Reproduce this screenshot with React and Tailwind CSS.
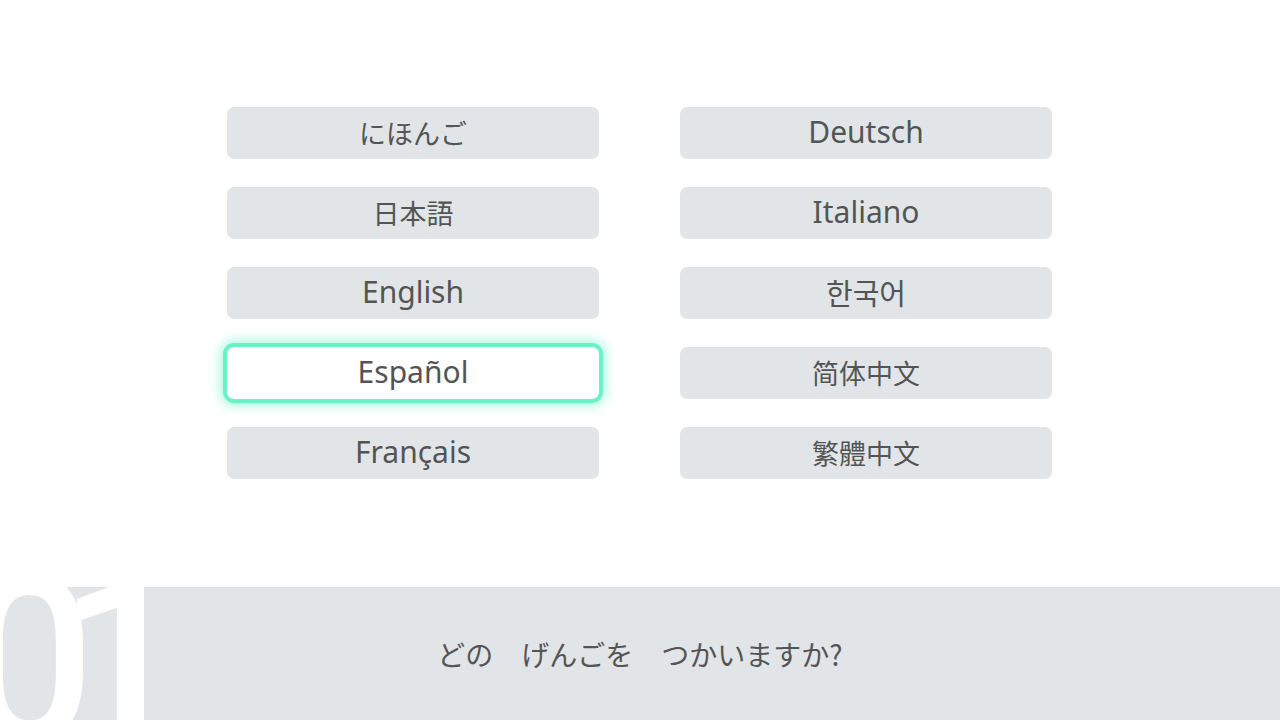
import React, { useState } from 'react';

const left = ["にほんご", "日本語", "English", "Español", "Français"];
const right = ["Deutsch", "Italiano", "한국어", "简体中文", "繁體中文"];

const styleFor = (label) => {
  if (label === "简体中文") return "font-['Noto_Sans_CJK_SC',sans-serif] text-[27px]";
  if (label === "繁體中文") return "font-['Noto_Sans_CJK_TC',sans-serif] text-[27px]";
  if (label === "한국어") return "font-['Noto_Sans_CJK_KR',sans-serif] text-[29px]";
  if (label === "にほんご" || label === "日本語") return "font-['Noto_Sans_CJK_JP',sans-serif] text-[27px]";
  return "font-['Noto_Sans',sans-serif] text-[30px] pb-[3px]";
};

const LangButton = ({ label, active, onClick }) => (
  <button
    onClick={onClick}
    className={`h-[52px] w-[372px] rounded-[7px] flex items-center justify-center text-[#535555] ${styleFor(label)} ${
      active
        ? "bg-white shadow-[0_0_0_4px_#68f2c6,0_0_12px_7px_#b0f8de]"
        : "bg-[#e2e5e8]"
    }`}
  >
    {label}
  </button>
);

export default function App() {
  const [selected, setSelected] = useState("Español");

  return (
    <div className="w-[1280px] h-[720px] bg-white flex flex-col overflow-hidden">
      <div className="flex-1 pt-[107px] pl-[227px] flex gap-[81px]">
        {[left, right].map((col, i) => (
          <div key={i} className="flex flex-col gap-[28px]">
            {col.map((label) => (
              <LangButton key={label} label={label} active={selected === label} onClick={() => setSelected(label)} />
            ))}
          </div>
        ))}
      </div>

      <div className="relative h-[133px] bg-[#e2e5e8] overflow-hidden flex items-center justify-center">
        <span className="absolute left-[-36px] top-[-40px] text-[230px] leading-none font-medium tracking-[-37px] text-white font-['Roboto',sans-serif] select-none">
          01
        </span>
        <p className="relative text-[28px] text-[#555555] font-['Noto_Sans_CJK_JP',sans-serif]">
          どの　げんごを　つかいますか?
        </p>
      </div>
    </div>
  );
}
